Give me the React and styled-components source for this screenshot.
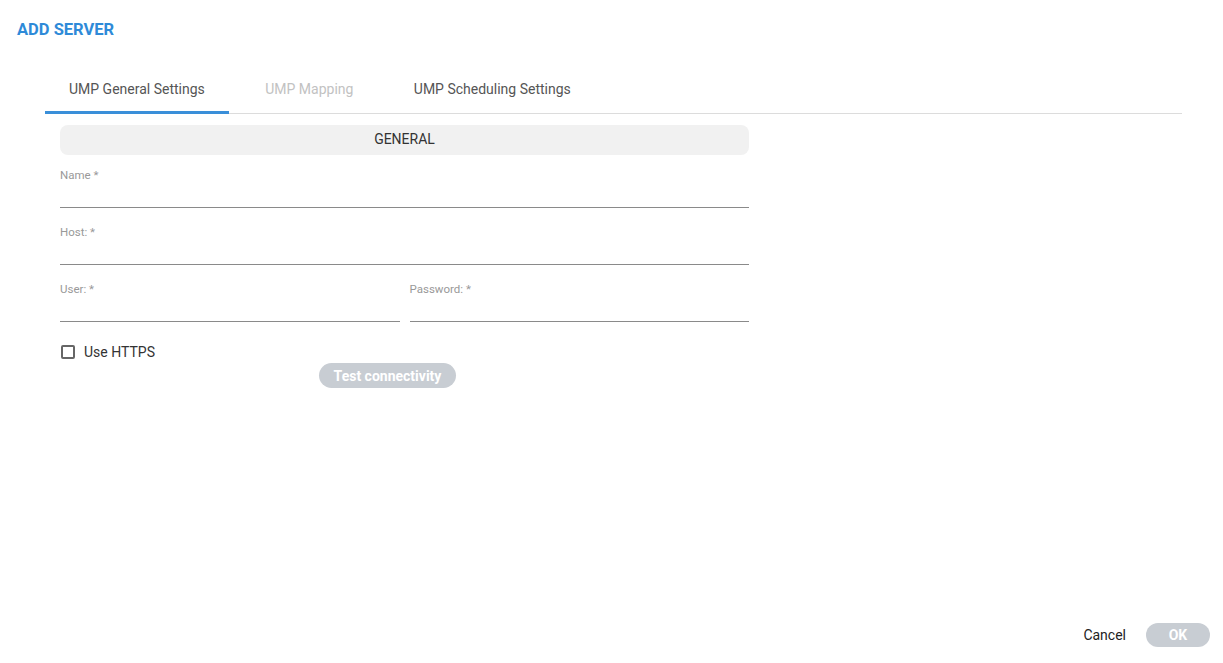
import React from "react";
import styled, { createGlobalStyle } from "styled-components";

const GlobalStyle = createGlobalStyle`
  html, body {
    margin: 0;
    padding: 0;
    background: #fff;
    font-family: Roboto, "Liberation Sans", Arial, sans-serif;
  }
  * { box-sizing: border-box; }
`;

function App() {
  const tabs = [
    { id: 1, label: "UMP General Settings", active: true },
    { id: 2, label: "UMP Mapping", disabled: true },
    { id: 3, label: "UMP Scheduling Settings" },
  ];
  return (
    <Page>
      <GlobalStyle />
      <Title>ADD SERVER</Title>
      <TabBar>
        {tabs.map((tab) => (
          <Tab key={tab.id} $active={tab.active} $disabled={tab.disabled}>
            {tab.label}
          </Tab>
        ))}
      </TabBar>
      <Form>
        <SectionHeader>GENERAL</SectionHeader>
        <Field label="Name *" />
        <Field label="Host: *" />
        <Row>
          <Field label="User: *" />
          <Field label="Password: *" />
        </Row>
        <CheckRow>
          <Box />
          <CheckLabel>Use HTTPS</CheckLabel>
        </CheckRow>
        <PillButton $wide disabled>
          Test connectivity
        </PillButton>
      </Form>
      <Footer>
        <TextButton>Cancel</TextButton>
        <PillButton disabled>OK</PillButton>
      </Footer>
    </Page>
  );
}

const Field = ({ label }) => {
  return (
    <FieldWrap>
      <Label>{label}</Label>
      <Input />
    </FieldWrap>
  );
};

const Page = styled.div`
  display: flex;
  flex-direction: column;
  min-height: 100vh;
`;

const Title = styled.h1`
  margin: 0;
  padding: 20px 17px 0;
  font-size: 16.5px;
  line-height: 20px;
  font-weight: 700;
  color: #2e8ad8;
`;

const TabBar = styled.div`
  display: flex;
  margin: 25px 41px 0 45px;
  border-bottom: 1px solid #dcdcdc;
`;

const Tab = styled.div`
  min-width: 161px;
  height: 49px;
  padding: 1px 24px 0;
  display: flex;
  align-items: center;
  justify-content: center;
  font-size: 14px;
  color: ${(p) => (p.$disabled ? "#c2c2c2" : "#555")};
  border-bottom: 3px solid ${(p) => (p.$active ? "#3a8fd9" : "transparent")};
  margin-bottom: -1px;
`;

const Form = styled.div`
  width: 689px;
  margin: 11px 0 0 60px;
  display: flex;
  flex-direction: column;
`;

const SectionHeader = styled.div`
  height: 30px;
  padding-bottom: 2px;
  border-radius: 8px;
  background: #f1f1f1;
  display: flex;
  align-items: center;
  justify-content: center;
  font-size: 14px;
  color: #333;
  margin-bottom: 12px;
`;

const FieldWrap = styled.div`
  flex: 1;
  display: flex;
  flex-direction: column;
  margin-bottom: 16px;
`;

const Label = styled.div`
  font-size: 11.5px;
  line-height: 17px;
  color: #999;
`;

const Input = styled.div`
  height: 24px;
  border-bottom: 1px solid #8a8a8a;
`;

const Row = styled.div`
  display: flex;
  gap: 10px;
`;

const CheckRow = styled.div`
  display: flex;
  align-items: center;
  gap: 9px;
  margin-top: 5px;
  height: 18px;
  padding-left: 1px;
`;

const Box = styled.span`
  width: 14px;
  height: 14px;
  border: 2px solid #666;
  border-radius: 2px;
`;

const CheckLabel = styled.span`
  font-size: 14px;
  color: #333;
`;

const PillButton = styled.button`
  align-self: ${(p) => (p.$wide ? "flex-start" : "auto")};
  margin: ${(p) => (p.$wide ? "2px 0 0 259px" : "0")};
  width: ${(p) => (p.$wide ? "137px" : "64px")};
  height: ${(p) => (p.$wide ? "25px" : "24px")};
  border: none;
  border-radius: 13px;
  background: #c8cdd3;
  color: #fff;
  font-family: Roboto, "Liberation Sans", Arial, sans-serif;
  font-size: 14px;
  font-weight: 700;
  padding: 0;
`;

const Footer = styled.div`
  margin-top: auto;
  display: flex;
  justify-content: flex-end;
  align-items: center;
  gap: 20px;
  padding: 0 13px 16px 0;
`;

const TextButton = styled.span`
  font-size: 14px;
  color: #222;
`;

export default App;
